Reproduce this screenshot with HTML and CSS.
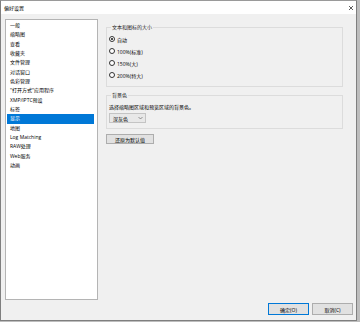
FILE: index.html
```html
<!DOCTYPE html>
<html lang="zh-CN">
<head>
    <meta charset="UTF-8">
    <title>偏好设置</title>
    <link rel="stylesheet" href="styles.css">
</head>
<body>
    <div class="window">
        <div class="titlebar">
            <span class="title">偏好设置</span>
            <svg class="close" width="6" height="6" viewBox="0 0 6 6">
                <path d="M1 1 L5 5 M5 1 L1 5" stroke="#333" stroke-width="0.8" fill="none"/>
            </svg>
        </div>

        <div class="content">
            <div class="main">
                <ul class="nav-list">
                    <li>一般</li>
                    <li>缩略图</li>
                    <li>查看</li>
                    <li>收藏夹</li>
                    <li>文件管理</li>
                    <li>对话窗口</li>
                    <li>色彩管理</li>
                    <li>"打开方式"应用程序</li>
                    <li>XMP/IPTC预设</li>
                    <li>标签</li>
                    <li class="selected">显示</li>
                    <li>地图</li>
                    <li>Log Matching</li>
                    <li>RAW处理</li>
                    <li>Web服务</li>
                    <li>动画</li>
                </ul>

                <div class="settings">
                    <fieldset class="group group-size">
                        <legend>文本和图标的大小</legend>
                        <div class="radio-row"><span class="radio checked"></span>自动</div>
                        <div class="radio-row"><span class="radio"></span>100%(标准)</div>
                        <div class="radio-row"><span class="radio"></span>150%(大)</div>
                        <div class="radio-row"><span class="radio"></span>200%(特大)</div>
                    </fieldset>

                    <fieldset class="group group-bg">
                        <legend>背景色</legend>
                        <div class="hint">选择缩略图区域和预览区域的背景色。</div>
                        <div class="select">
                            <span>深灰色</span>
                            <svg width="5" height="4" viewBox="0 0 5 4">
                                <polyline points="0.5,1 2.5,3 4.5,1" stroke="#555" stroke-width="0.6" fill="none"/>
                            </svg>
                        </div>
                    </fieldset>

                    <button class="btn btn-reset">还原为默认值</button>
                </div>
            </div>

            <div class="footer">
                <button class="btn btn-footer btn-default">确定(O)</button>
                <button class="btn btn-footer">取消(C)</button>
            </div>
        </div>
    </div>
</body>
</html>
```

FILE: styles.css
```css
body {
    margin: 0;
    background-color: #bdbdbd;
    font-family: "Open Sans", "Noto Sans CJK SC", sans-serif;
    font-size: 5px;
    color: #000;
}
.window {
    width: 355px;
    height: 319px;
    border: 1px solid #7f7f7f;
    border-top-color: #9a9a9a;
    background-color: #f0f0f0;
    display: flex;
    flex-direction: column;
}
.titlebar {
    height: 13px;
    background-color: #fff;
    display: flex;
    align-items: center;
    justify-content: space-between;
    padding: 0 2px 0 3px;
}
.title {
    font-size: 5px;
    line-height: 6px;
}
.content {
    flex: 1;
    display: flex;
    flex-direction: column;
    padding: 5px 3px 5px 4px;
}
.main {
    display: flex;
    gap: 8px;
}
.nav-list {
    list-style: none;
    margin: 0;
    padding: 1px 1px 0 1px;
    width: 89px;
    height: 278px;
    background-color: #fff;
    border: 1px solid #b4b4b4;
}
.nav-list li {
    height: 9.33px;
    line-height: 9.33px;
    padding-left: 3px;
    margin-right: 2px;
    white-space: nowrap;
}
.nav-list li.selected {
    background-color: #0078d7;
    color: #fff;
}
.settings {
    width: 237px;
    padding-top: 5px;
}
.group {
    margin: 0;
    border: 1px solid #dcdcdc;
    padding: 3px 3px 5px 2px;
}
.group legend {
    padding: 0 1px;
    margin-left: 2px;
    line-height: 6px;
    color: #222;
}
.radio-row {
    display: flex;
    align-items: center;
    height: 12px;
    gap: 2px;
}
.radio {
    width: 4px;
    height: 4px;
    border: 1px solid #333;
    border-radius: 50%;
    background-color: #fff;
    display: flex;
    align-items: center;
    justify-content: center;
}
.radio.checked::after {
    content: "";
    width: 2px;
    height: 2px;
    border-radius: 50%;
    background-color: #111;
}
.group-bg {
    margin-top: 5px;
    padding: 6px 3px 5px 2px;
}
.hint {
    line-height: 6px;
}
.select {
    margin-top: 3px;
    width: 30px;
    height: 8px;
    border: 1px solid #c4c4c4;
    background-color: #e8e8e8;
    display: flex;
    align-items: center;
    justify-content: space-between;
    padding: 0 2px 0 3px;
    box-sizing: content-box;
}
.btn {
    font-family: inherit;
    font-size: 5px;
    color: #000;
    background-color: #e1e1e1;
    border: 1px solid #adadad;
    padding: 0;
    margin: 0;
}
.btn-reset {
    margin-top: 5px;
    width: 48px;
    height: 10px;
}
.footer {
    display: flex;
    justify-content: flex-end;
    gap: 3px;
    margin-top: 3px;
}
.btn-footer {
    width: 41px;
    height: 12px;
}
.btn-default {
    border-color: #0078d7;
}
```
